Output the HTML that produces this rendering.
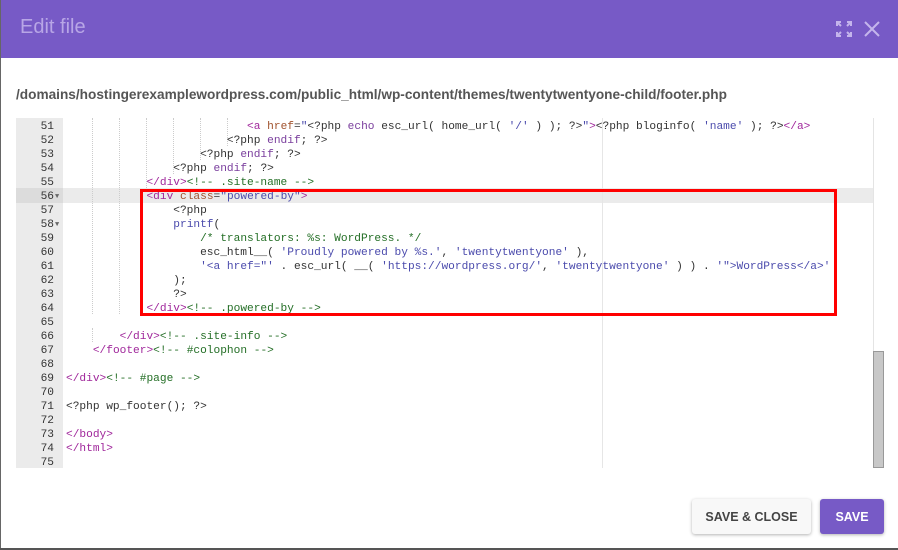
<!DOCTYPE html>
<html><head><meta charset="utf-8"><style>
*{margin:0;padding:0;box-sizing:border-box}
body{width:898px;height:550px;background:#fff;position:relative;overflow:hidden;font-family:"Liberation Sans",sans-serif}
.hdr{position:absolute;left:0;top:0;width:898px;height:58px;background:#775ac6}
.title{position:absolute;left:20px;top:16px;font-size:20px;color:#b8a6e6}
.path{position:absolute;left:16px;top:87px;font-size:13.65px;font-weight:bold;color:#555}
.ed{position:absolute;left:16px;top:118px;width:868px;height:350px;border-right:1px solid #ddd}
.gut{position:absolute;left:16px;top:118px;width:47px;height:350px;background:#ebebeb}
.code{position:absolute;left:0;top:120px;font-family:"Liberation Mono",monospace;font-size:11.18px;line-height:14px;white-space:pre;color:#333}
.ln{position:absolute;left:16px;width:38px;text-align:right;color:#333}
.l{position:absolute;left:66px}
.hl{position:absolute;left:16px;top:188px;width:857px;height:15px;background:#ebebeb}
.hlg{position:absolute;left:16px;top:188px;width:47px;height:15px;background:#dcdcdc}
.t{color:#a0279b}.a{color:#a0522d}.s{color:#4a4aac}.c{color:#236e25}.k{color:#7a3e9d}
.arr{position:absolute;left:55px;font-size:7px;color:#666}
.sb{position:absolute;left:873px;top:118px;width:11px;height:350px;background:#fff;border-left:1px solid #e4e4e4}
.th{position:absolute;left:873px;top:351px;width:11px;height:117px;background:#c8c8c8;border:1px solid #999}
.pm{position:absolute;left:602px;top:118px;width:1px;height:350px;background:#e6e6e6}
.box{position:absolute;left:140px;top:189px;width:697px;height:127px;border:3px solid #f00}
.btn{position:absolute;top:499px;height:35px;font-size:12.5px;font-weight:bold;display:flex;align-items:center;justify-content:center;border-radius:3px}
.b1{left:692px;width:119px;background:#f8f8f8;color:#444;box-shadow:0 1px 3px rgba(0,0,0,.3)}
.b2{left:820px;width:64px;background:#775ac6;color:#fff;box-shadow:0 1px 3px rgba(0,0,0,.3)}
.g{position:absolute;width:0;border-left:1px dotted #ccc}
</style></head><body>
<div class="hdr"><div class="title">Edit file</div>
<svg style="position:absolute;left:836px;top:21px" width="16" height="16" viewBox="0 0 16 16" fill="none" stroke="#c4b5ec" stroke-width="2"><path d="M1 1l4 4M1 5V1h4M15 1l-4 4M15 5V1h-4M1 15l4-4M1 11v4h4M15 15l-4-4M15 11v4h-4"/></svg>
<svg style="position:absolute;left:864px;top:21px" width="16" height="16" viewBox="0 0 16 16" stroke="#c4b5ec" stroke-width="2"><path d="M1 1L15 15M15 1L1 15"/></svg>
</div>
<div class="path">/domains/hostingerexamplewordpress.com/public_html/wp-content/themes/twentytwentyone-child/footer.php</div>
<div class="ed"></div>
<div class="hl"></div>
<div class="gut"></div>
<div class="hlg"></div>
<div class="pm"></div>
<div class="g" style="left:92px;top:118px;height:196px"></div>
<div class="g" style="left:119px;top:118px;height:196px"></div>
<div class="g" style="left:146px;top:118px;height:70px"></div>
<div class="g" style="left:173px;top:118px;height:56px"></div>
<div class="g" style="left:200px;top:118px;height:42px"></div>
<div class="g" style="left:227px;top:118px;height:28px"></div>
<div class="g" style="left:92px;top:328px;height:14px"></div>
<div class="code">
<div class="ln" style="top:0">51</div><div class="l" style="top:0">                           <span class="t">&lt;a</span> <span class="a">href</span>=<span class="s">"</span>&lt;?php <span class="k">echo</span> esc_url( home_url( <span class="s">'/'</span> ) ); ?&gt;<span class="s">"</span><span class="t">&gt;</span>&lt;?php bloginfo( <span class="s">'name'</span> ); ?&gt;<span class="t">&lt;/a&gt;</span></div>
<div class="ln" style="top:14px">52</div><div class="l" style="top:14px">                        &lt;?php <span class="k">endif</span>; ?&gt;</div>
<div class="ln" style="top:28px">53</div><div class="l" style="top:28px">                    &lt;?php <span class="k">endif</span>; ?&gt;</div>
<div class="ln" style="top:42px">54</div><div class="l" style="top:42px">                &lt;?php <span class="k">endif</span>; ?&gt;</div>
<div class="ln" style="top:56px">55</div><div class="l" style="top:56px">            <span class="t">&lt;/div&gt;</span><span class="c">&lt;!-- .site-name --&gt;</span></div>
<div class="ln" style="top:70px">56</div><span class="arr" style="top:70px">▼</span><div class="l" style="top:70px">            <span class="t">&lt;div</span> <span class="a">class</span>=<span class="s">"powered-by"</span><span class="t">&gt;</span></div>
<div class="ln" style="top:84px">57</div><div class="l" style="top:84px">                &lt;?php</div>
<div class="ln" style="top:98px">58</div><span class="arr" style="top:98px">▼</span><div class="l" style="top:98px">                <span class="s">printf</span>(</div>
<div class="ln" style="top:112px">59</div><div class="l" style="top:112px">                    <span class="c">/* translators: %s: WordPress. */</span></div>
<div class="ln" style="top:126px">60</div><div class="l" style="top:126px">                    esc_html__( <span class="s">'Proudly powered by %s.'</span>, <span class="s">'twentytwentyone'</span> ),</div>
<div class="ln" style="top:140px">61</div><div class="l" style="top:140px">                    <span class="s">'&lt;a href="'</span> . esc_url( __( <span class="s">'https://wordpress.org/'</span>, <span class="s">'twentytwentyone'</span> ) ) . <span class="s">'"&gt;WordPress&lt;/a&gt;'</span></div>
<div class="ln" style="top:154px">62</div><div class="l" style="top:154px">                );</div>
<div class="ln" style="top:168px">63</div><div class="l" style="top:168px">                ?&gt;</div>
<div class="ln" style="top:182px">64</div><div class="l" style="top:182px">            <span class="t">&lt;/div&gt;</span><span class="c">&lt;!-- .powered-by --&gt;</span></div>
<div class="ln" style="top:196px">65</div>
<div class="ln" style="top:210px">66</div><div class="l" style="top:210px">        <span class="t">&lt;/div&gt;</span><span class="c">&lt;!-- .site-info --&gt;</span></div>
<div class="ln" style="top:224px">67</div><div class="l" style="top:224px">    <span class="t">&lt;/footer&gt;</span><span class="c">&lt;!-- #colophon --&gt;</span></div>
<div class="ln" style="top:238px">68</div>
<div class="ln" style="top:252px">69</div><div class="l" style="top:252px"><span class="t">&lt;/div&gt;</span><span class="c">&lt;!-- #page --&gt;</span></div>
<div class="ln" style="top:266px">70</div>
<div class="ln" style="top:280px">71</div><div class="l" style="top:280px">&lt;?php wp_footer(); ?&gt;</div>
<div class="ln" style="top:294px">72</div>
<div class="ln" style="top:308px">73</div><div class="l" style="top:308px"><span class="t">&lt;/body&gt;</span></div>
<div class="ln" style="top:322px">74</div><div class="l" style="top:322px"><span class="t">&lt;/html&gt;</span></div>
<div class="ln" style="top:336px">75</div>
</div>
<div class="sb"></div><div class="th"></div>
<div class="box"></div>
<div class="btn b1">SAVE &amp; CLOSE</div>
<div class="btn b2">SAVE</div>
<div style="position:absolute;left:0;top:0;width:1px;height:550px;background:#666"></div>
<div style="position:absolute;left:0;top:548px;width:898px;height:2px;background:#555"></div>
</body></html>
